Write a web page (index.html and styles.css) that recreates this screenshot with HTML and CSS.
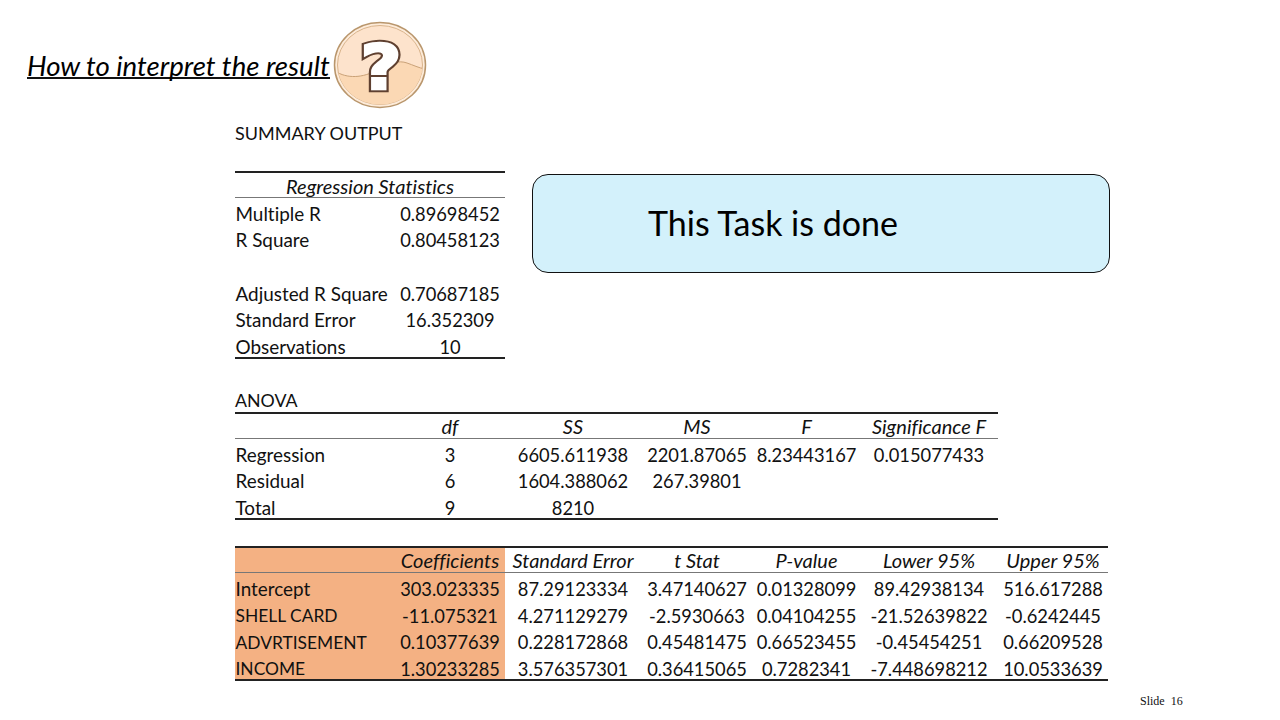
FILE: index.html
```html
<!DOCTYPE html>
<html lang="en">
<head>
<meta charset="utf-8">
<title>How to interpret the result</title>
<link rel="stylesheet" href="styles.css">
</head>
<body>
<div class="slide">
  <header class="head">
    <h1 class="title">How to interpret the result</h1>
    <svg class="badge" width="94" height="88" viewBox="0 0 94 88" role="img" aria-label="Question mark">
      <defs>
        <clipPath id="disc"><ellipse cx="47" cy="44" rx="42.5" ry="39.5"/></clipPath>
      </defs>
      <ellipse cx="47" cy="44" rx="45.5" ry="42.5" fill="#fdebd9" stroke="#b9966c" stroke-width="1.5"/>
      <ellipse cx="47" cy="44" rx="42.5" ry="39.5" fill="#fde3cc" stroke="#d9b48c" stroke-width="1"/>
      <path d="M2 50 C14 58 30 57 44 49 C56 42 66 39 74 42 C80 44 86 47 92 48 L92 88 L2 88 Z" fill="#fbd8b4" stroke="#c9a177" stroke-width="1" clip-path="url(#disc)"/>
      <g transform="translate(48 0) scale(1.14 1) translate(-48 0)">
        <text class="mark mark-edge" x="48" y="68" text-anchor="middle">?</text>
        <text class="mark mark-face" x="48" y="68" text-anchor="middle">?</text>
      </g>
    </svg>
  </header>

  <main class="content">
    <p class="summary">SUMMARY OUTPUT</p>

    <div class="top">
      <section class="stats">
        <div class="row stat-row cap rule-top rule-mid"><span class="wide it">Regression Statistics</span></div>
        <div class="row stat-row"><span class="lbl">Multiple R</span><span>0.89698452</span></div>
        <div class="row stat-row"><span class="lbl">R Square</span><span>0.80458123</span></div>
        <div class="row stat-row"></div>
        <div class="row stat-row"><span class="lbl">Adjusted R Square</span><span>0.70687185</span></div>
        <div class="row stat-row"><span class="lbl">Standard Error</span><span>16.352309</span></div>
        <div class="row stat-row rule-bot"><span class="lbl">Observations</span><span>10</span></div>
      </section>
      <aside class="callout">This Task is done</aside>
    </div>

    <section class="anova">
      <div class="anova-title">ANOVA</div>
      <div class="row anova-row cap rule-top rule-mid it"><span></span><span>df</span><span>SS</span><span>MS</span><span>F</span><span>Significance F</span></div>
      <div class="row anova-row"><span class="lbl">Regression</span><span>3</span><span>6605.611938</span><span>2201.87065</span><span>8.23443167</span><span>0.015077433</span></div>
      <div class="row anova-row"><span class="lbl">Residual</span><span>6</span><span>1604.388062</span><span>267.39801</span><span></span><span></span></div>
      <div class="row anova-row rule-bot"><span class="lbl">Total</span><span>9</span><span>8210</span><span></span><span></span><span></span></div>
    </section>

    <section class="coef">
      <div class="row coef-row cap rule-top rule-mid it"><span class="hl"></span><span class="hl">Coefficients</span><span>Standard Error</span><span>t Stat</span><span>P-value</span><span>Lower 95%</span><span>Upper 95%</span></div>
      <div class="row coef-row"><span class="lbl hl">Intercept</span><span class="hl">303.023335</span><span>87.29123334</span><span>3.47140627</span><span>0.01328099</span><span>89.42938134</span><span>516.617288</span></div>
      <div class="row coef-row"><span class="lbl caps hl">SHELL CARD</span><span class="hl">-11.075321</span><span>4.271129279</span><span>-2.5930663</span><span>0.04104255</span><span>-21.52639822</span><span>-0.6242445</span></div>
      <div class="row coef-row"><span class="lbl caps hl">ADVRTISEMENT</span><span class="hl">0.10377639</span><span>0.228172868</span><span>0.45481475</span><span>0.66523455</span><span>-0.45454251</span><span>0.66209528</span></div>
      <div class="row coef-row rule-bot"><span class="lbl caps hl">INCOME</span><span class="hl">1.30233285</span><span>3.576357301</span><span>0.36415065</span><span>0.7282341</span><span>-7.448698212</span><span>10.0533639</span></div>
    </section>
  </main>

  <footer class="foot">Slide&nbsp; 16</footer>
</div>
</body>
</html>
```

FILE: styles.css
```css
* { box-sizing: border-box; }
html, body { margin: 0; padding: 0; background: #fff; }
body {
  font-family: "Lato", "Liberation Sans", sans-serif;
  font-variant-ligatures: none;
  color: #111;
}

.slide {
  width: 1280px;
  height: 720px;
  overflow: hidden;
  display: flex;
  flex-direction: column;
}

.head {
  display: flex;
  align-items: flex-start;
  height: 88px;
  margin-top: 21px;
  padding-left: 27px;
}
.title {
  margin: 27px 0 0;
  font-size: 27.6px;
  line-height: 36px;
  font-weight: 400;
  font-style: italic;
  color: #000;
  border-bottom: 2px solid #111;
  height: 31px;
  white-space: nowrap;
  width: 303px;
}
.badge { display: block; margin-left: 3px; flex: none; }
.mark {
  font-family: "DejaVu Sans", sans-serif;
  font-weight: 700;
  font-size: 62px;
  stroke-linejoin: miter;
}
.mark-edge { fill: #5f4030; stroke: #5f4030; stroke-width: 6.5px; }
.mark-face { fill: #fff; stroke: #fff; stroke-width: 2.5px; }

.content {
  width: 873px;
  margin-left: 235px;
  font-size: 18.3px;
}
.summary {
  margin: 11px 0 0;
  height: 27px;
  line-height: 27px;
  font-size: 18px;
}

.top {
  display: flex;
  margin-top: 24px;
}
.stats { width: 270px; flex: none; }

.row {
  display: grid;
  grid-template-rows: minmax(0, 1fr);
  height: 26.6px;
  text-align: center;
  white-space: nowrap;
}
.row > span { min-height: 0; line-height: 26.6px; padding-top: 2.8px; }
.row > span:nth-child(2) { padding-right: 2px; }
.row.cap > span { padding-top: 0; line-height: 25.6px; }
.row.stat-row.cap > span { line-height: 26.4px; }
.cap { height: 27px; }
.lbl { text-align: left; padding-left: 0.5px; font-size: 18.9px; }
.row > .caps { font-size: 17.4px; padding-top: 3.4px; }
.it { font-style: italic; font-size: 20px; }
.row.it > span:first-child { font-size: 18px; }
.wide { grid-column: 1 / -1; }

.stat-row { grid-template-columns: 162px 108px; }
.anova-row { grid-template-columns: 162px 108px 136px 112px 107px 138px; width: 763px; }
.coef-row { grid-template-columns: 162px 108px 136px 112px 107px 138px 110px; }

.rule-top { border-top: 2px solid #222; }
.rule-mid { border-bottom: 1px solid #777; }
.rule-bot { border-bottom: 2px solid #222; height: 28px; }

.callout {
  flex: none;
  width: 578px;
  height: 99px;
  margin: 3px 0 0 27px;
  padding: 0 0 3px 115px;
  display: flex;
  align-items: center;
  background: #d3f1fb;
  border: 1px solid #111;
  border-radius: 16px;
  font-size: 34px;
  color: #000;
}

.anova { margin-top: 28px; }
.anova-title { height: 25px; line-height: 26px; font-size: 17.8px; }

.coef { margin-top: 26px; }
.hl { background: #f4b183; }

.foot {
  margin: 13px 0 0 1140px;
  font-family: "Liberation Serif", serif;
  font-size: 12px;
  line-height: 14px;
  color: #111;
}
```
